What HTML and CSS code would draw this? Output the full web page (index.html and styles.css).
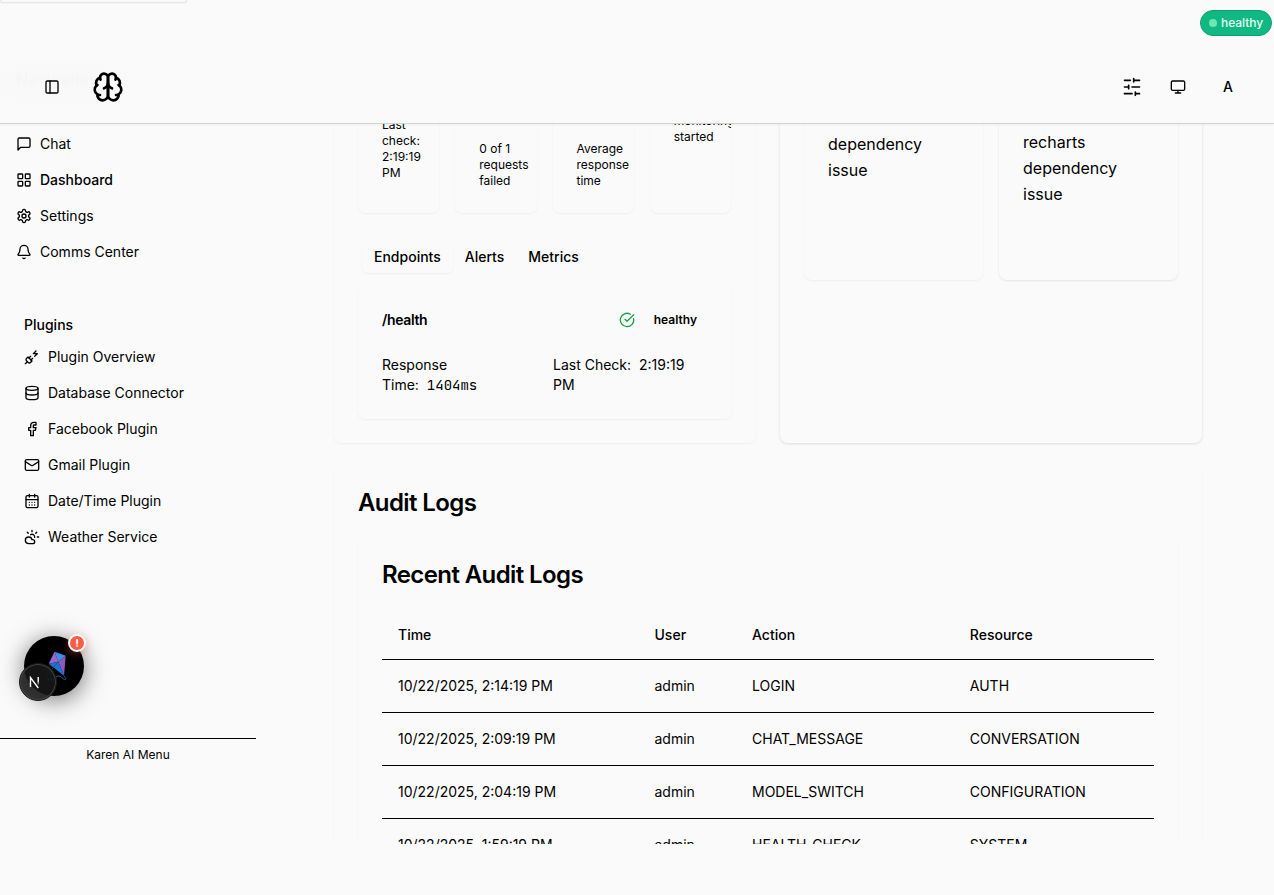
FILE: index.html
```html
<!DOCTYPE html>
<html lang="en">
<head>
<meta charset="utf-8">
<title>Karen AI Dashboard</title>
<link rel="stylesheet" href="styles.css">
</head>
<body>
<div class="top-strip">
  <div class="peek-card"></div>
  <div class="status-pill"><span class="status-dot"></span>healthy</div>
</div>
<header class="header">
  <div class="ghost-title">Navigation</div>
  <div class="header-left">
    <svg class="icon" viewBox="0 0 24 24"><rect width="18" height="18" x="3" y="3" rx="2"/><path d="M9 3v18"/></svg>
    <svg class="icon brain" viewBox="0 0 24 24"><path d="M12 5a3 3 0 1 0-5.997.125 4 4 0 0 0-2.526 5.77 4 4 0 0 0 .556 6.588A4 4 0 1 0 12 18Z"/><path d="M12 5a3 3 0 1 1 5.997.125 4 4 0 0 1 2.526 5.77 4 4 0 0 1-.556 6.588A4 4 0 1 1 12 18Z"/><path d="M15 13a4.5 4.5 0 0 1-3-4 4.5 4.5 0 0 1-3 4"/><path d="M17.599 6.5a3 3 0 0 0 .399-1.375"/><path d="M6.003 5.125A3 3 0 0 0 6.401 6.5"/><path d="M3.477 10.896a4 4 0 0 1 .585-.396"/><path d="M19.938 10.5a4 4 0 0 1 .585.396"/><path d="M6 18a4 4 0 0 1-1.967-.516"/><path d="M19.967 17.484A4 4 0 0 1 18 18"/></svg>
  </div>
  <div class="header-right">
    <svg class="icon sliders" viewBox="0 0 24 24"><path d="M21 4h-7M10 4H3M21 12h-9M8 12H3M21 20h-5M12 20H3M14 2v4M8 10v4M16 18v4"/></svg>
    <svg class="icon" viewBox="0 0 24 24"><rect width="20" height="14" x="2" y="3" rx="2"/><path d="M8 21h8M12 17v4"/></svg>
    <span class="avatar">A</span>
  </div>
</header>
<div class="body-row">
  <aside class="sidebar">
    <nav class="menu">
      <a class="item"><svg class="icon" viewBox="0 0 24 24"><path d="M21 15a2 2 0 0 1-2 2H7l-4 4V5a2 2 0 0 1 2-2h14a2 2 0 0 1 2 2z"/></svg>Chat</a>
      <a class="item active"><svg class="icon" viewBox="0 0 24 24"><rect width="7" height="7" x="3" y="3" rx="1"/><rect width="7" height="7" x="14" y="3" rx="1"/><rect width="7" height="7" x="14" y="14" rx="1"/><rect width="7" height="7" x="3" y="14" rx="1"/></svg>Dashboard</a>
      <a class="item"><svg class="icon" viewBox="0 0 24 24"><path d="M12.22 2h-.44a2 2 0 0 0-2 2v.18a2 2 0 0 1-1 1.73l-.43.25a2 2 0 0 1-2 0l-.15-.08a2 2 0 0 0-2.73.73l-.22.38a2 2 0 0 0 .73 2.73l.15.1a2 2 0 0 1 1 1.72v.51a2 2 0 0 1-1 1.74l-.15.09a2 2 0 0 0-.73 2.73l.22.38a2 2 0 0 0 2.73.73l.15-.08a2 2 0 0 1 2 0l.43.25a2 2 0 0 1 1 1.73V20a2 2 0 0 0 2 2h.44a2 2 0 0 0 2-2v-.18a2 2 0 0 1 1-1.73l.43-.25a2 2 0 0 1 2 0l.15.08a2 2 0 0 0 2.73-.73l.22-.39a2 2 0 0 0-.73-2.73l-.15-.08a2 2 0 0 1-1-1.74v-.5a2 2 0 0 1 1-1.74l.15-.09a2 2 0 0 0 .73-2.73l-.22-.38a2 2 0 0 0-2.73-.73l-.15.08a2 2 0 0 1-2 0l-.43-.25a2 2 0 0 1-1-1.73V4a2 2 0 0 0-2-2z"/><circle cx="12" cy="12" r="3"/></svg>Settings</a>
      <a class="item"><svg class="icon" viewBox="0 0 24 24"><path d="M10.268 21a2 2 0 0 0 3.464 0"/><path d="M3.262 15.326A1 1 0 0 0 4 17h16a1 1 0 0 0 .74-1.673C19.41 13.956 18 12.499 18 8A6 6 0 0 0 6 8c0 4.499-1.411 5.956-2.738 7.326"/></svg>Comms Center</a>
    </nav>
    <div class="group">
      <div class="group-title">Plugins</div>
      <nav class="menu-sub">
        <a class="item"><svg class="icon" viewBox="0 0 24 24"><path d="M6.3 20.3a2.4 2.4 0 0 0 3.4 0L12 18l-6-6-2.3 2.3a2.4 2.4 0 0 0 0 3.4Z"/><path d="m2 22 3-3M7.5 13.5 10 11M10.5 16.5 13 14M18 3l-4 4h6l-4 4"/></svg>Plugin Overview</a>
        <a class="item"><svg class="icon" viewBox="0 0 24 24"><ellipse cx="12" cy="5" rx="9" ry="3"/><path d="M3 5v14a9 3 0 0 0 18 0V5"/><path d="M3 12a9 3 0 0 0 18 0"/></svg>Database Connector</a>
        <a class="item"><svg class="icon" viewBox="0 0 24 24"><path d="M18 2h-3a5 5 0 0 0-5 5v3H7v4h3v8h4v-8h3l1-4h-4V7a1 1 0 0 1 1-1h3z"/></svg>Facebook Plugin</a>
        <a class="item"><svg class="icon" viewBox="0 0 24 24"><rect width="20" height="16" x="2" y="4" rx="2"/><path d="m22 7-8.97 5.7a1.94 1.94 0 0 1-2.06 0L2 7"/></svg>Gmail Plugin</a>
        <a class="item"><svg class="icon" viewBox="0 0 24 24"><path d="M8 2v4M16 2v4"/><rect width="18" height="18" x="3" y="4" rx="2"/><path d="M3 10h18M8 14h.01M12 14h.01M16 14h.01M8 18h.01M12 18h.01M16 18h.01"/></svg>Date/Time Plugin</a>
        <a class="item"><svg class="icon" viewBox="0 0 24 24"><path d="M12 2v2M4.93 4.93l1.41 1.41M20 12h2M19.07 4.93l-1.41 1.41"/><path d="M15.947 12.65a4 4 0 0 0-5.925-4.128"/><path d="M13 22H7a5 5 0 1 1 4.9-6H13a3 3 0 0 1 0 6Z"/></svg>Weather Service</a>
      </nav>
    </div>
    <div class="side-footer">Karen AI Menu</div>
  </aside>
  <main class="main">
    <div class="cards">
      <section class="card health">
        <div class="stats">
          <div class="stat first">Last check: 2:19:19 PM</div>
          <div class="stat">0 of 1 requests failed</div>
          <div class="stat">Average response time</div>
          <div class="stat last">monitoring started</div>
        </div>
        <div class="tabs"><span class="tab selected">Endpoints</span><span class="tab">Alerts</span><span class="tab">Metrics</span></div>
        <div class="endpoint">
          <div class="endpoint-head">
            <span class="endpoint-name">/health</span>
            <svg class="icon ok" viewBox="0 0 24 24"><path d="M21.801 10A10 10 0 1 1 17 3.335"/><path d="m9 11 3 3L22 4"/></svg>
            <span class="endpoint-state">healthy</span>
          </div>
          <div class="endpoint-info">
            <div>Response<br>Time: <span class="mono">1404ms</span></div>
            <div>Last Check: <span class="when">2:19:19 PM</span></div>
          </div>
        </div>
      </section>
      <section class="card charts">
        <div class="chart">dependency issue</div>
        <div class="chart raised">recharts dependency issue</div>
      </section>
    </div>
    <section class="card audit">
      <h2>Audit Logs</h2>
      <div class="log-card">
        <h2>Recent Audit Logs</h2>
        <table>
          <colgroup><col class="c-time"><col class="c-user"><col class="c-action"><col></colgroup>
          <thead><tr><th>Time</th><th>User</th><th>Action</th><th>Resource</th></tr></thead>
          <tbody>
            <tr><td>10/22/2025, 2:14:19 PM</td><td>admin</td><td>LOGIN</td><td>AUTH</td></tr>
            <tr><td>10/22/2025, 2:09:19 PM</td><td>admin</td><td>CHAT_MESSAGE</td><td>CONVERSATION</td></tr>
            <tr><td>10/22/2025, 2:04:19 PM</td><td>admin</td><td>MODEL_SWITCH</td><td>CONFIGURATION</td></tr>
            <tr><td>10/22/2025, 1:59:19 PM</td><td>admin</td><td>HEALTH_CHECK</td><td>SYSTEM</td></tr>
          </tbody>
        </table>
      </div>
    </section>
  </main>
</div>
<div class="assistant">
  <svg class="kite" viewBox="0 0 22 30"><path d="M8.5.7 19.7 4.7 12.3 10.7z" fill="#3c8fe6"/><path d="M8.5.7 2.7 12.7 12.3 10.7z" fill="#9a66cc"/><path d="M19.7 4.7 18 24.7 12.3 10.7z" fill="#9058bc"/><path d="M2.7 12.7 12.3 10.7 18 24.7z" fill="#1976d8"/><path d="M12.3 10.7 1 24" stroke="#303d4c" stroke-width=".8" fill="none"/><path d="M18 24.7Q21 29 18.5 28.5C16 28 15 24.500 12 25 9 25.500 8 29.500 4 29 2 28.700 1 28 1 27" stroke="#125c9c" fill="none"/></svg>
  <div class="dev-badge"><svg class="n-mark" viewBox="0 0 12 14"><defs><linearGradient id="fade" x1="0" y1="0" x2="0" y2="1"><stop offset="0.5" stop-color="#fff"/><stop offset="1" stop-color="#fff" stop-opacity="0"/></linearGradient></defs><path d="M1.500 12V2.500l7.800 10.500" fill="none" stroke="#fff" stroke-width="1.400"/><rect x="8.500" y="2" width="1.400" height="8.500" fill="url(#fade)"/></svg></div>
  <div class="alert-badge">!</div>
</div>
</body>
</html>
```
FILE: styles.css
```css
* { box-sizing: border-box; }
body {
  margin: 0;
  height: 895px;
  overflow: hidden;
  background: #fafafa;
  color: #000;
  font: 14px/20px Inter, "Liberation Sans", sans-serif;
}
.icon {
  width: 16px; height: 16px; flex: none; display: block;
  fill: none; stroke: currentColor; stroke-width: 2;
  stroke-linecap: round; stroke-linejoin: round;
}

.top-strip { height: 51px; display: flex; justify-content: space-between; align-items: flex-start; padding-right: 2px; }
.peek-card {
  width: 187px; height: 3px;
  border: 1px solid #e6e6e6; border-top: 0;
  border-radius: 0 0 6px 6px;
  box-shadow: 0 1px 1px rgba(0,0,0,.03);
}
.status-pill {
  margin-top: 10px; height: 26px; width: 72px;
  display: flex; align-items: center; gap: 4px; padding-left: 8px;
  background: #10b981; border: 1px solid #0d9f70; border-radius: 13px;
  color: #e4fff4; font-size: 12px; font-weight: 500; letter-spacing: -.05px;
}
.status-dot { width: 8px; height: 8px; border-radius: 50%; background: #6ee7b7; }

.header {
  position: relative; z-index: 2;
  height: 73px; display: flex; justify-content: space-between; align-items: center;
  border-bottom: 1px solid #d2d2d2;
  box-shadow: 0 1px 2px rgba(0,0,0,.05);
  background: radial-gradient(ellipse 125px 40px at 60px 32px, #f8f8f8, #fafafa);
}
.ghost-title {
  position: absolute; left: 16px; top: 18px;
  color: #f6f6f6; font-weight: 600; font-size: 16px; filter: blur(.5px);
}
.header-left { position: relative; display: flex; align-items: center; gap: 32px; padding-left: 44px; }
.brain { width: 32px; height: 32px; }
.header-right { display: flex; align-items: center; padding-right: 28px; gap: 28px; }
.sliders { width: 20px; height: 20px; }
.avatar { width: 36px; text-align: center; font-weight: 500; margin-left: -4px; }

.body-row { display: flex; height: 720px; overflow: hidden; }
.sidebar { width: 256px; flex: none; display: flex; flex-direction: column; }
.menu { padding: 2px 8px 0; }
.item { display: flex; align-items: center; gap: 8px; height: 36px; padding: 0 8px; }
.active { font-weight: 500; }
.group { padding: 39px 16px 0; }
.group-title { height: 32px; line-height: 32px; padding-left: 8px; font-weight: 500; margin-bottom: -2px; }
.group .item { padding-left: 8px; }
.side-footer {
  margin-top: auto; height: 106px; padding-top: 8px;
  border-top: 1px solid #000; text-align: center; font-size: 12px; line-height: 16px;
}

.main { flex: 1; padding: 0 72px 0 78px; }
.cards { display: grid; grid-template-columns: 422px 422px; gap: 24px; height: 319px; }
.card { border-radius: 8px; box-shadow: 0 1px 2px rgba(0,0,0,.05); }
.health { padding: 0 24px; margin-top: -24px; padding-top: 24px; }
.stats { display: grid; grid-template-columns: repeat(4, minmax(0, 1fr)); gap: 16px; padding-right: 1px; }
.stat {
  height: 113px; margin-top: -24px; padding: 41px 0 0 24px;
  border-radius: 8px; box-shadow: 0 1px 2px rgba(0,0,0,.05);
  font-size: 12px; line-height: 16px;
}
.first { padding-top: 17px; padding-right: 10px; }
.last { padding-top: 13px; overflow: hidden; }
.tabs { display: flex; padding: 28px 4px 0; }
.tab { height: 32px; line-height: 32px; padding: 0 12px; font-weight: 500; }
.selected { border-radius: 6px; box-shadow: 0 1px 2px rgba(0,0,0,.05); }
.endpoint {
  margin-top: 13px; height: 133px; padding: 24px;
  border-radius: 8px; box-shadow: 0 1px 2px rgba(0,0,0,.05);
}
.endpoint-head { display: flex; align-items: center; height: 20px; }
.endpoint-name { flex: 1; font-weight: 600; letter-spacing: -.35px; }
.ok { color: #16a34a; }
.endpoint-state { margin: 0 11px 0 19px; font-size: 12px; font-weight: 600; }
.endpoint-info { display: grid; grid-template-columns: 1fr 1fr; gap: 16px; margin-top: 25px; }
.mono { font-family: "JetBrains Mono", "Roboto Mono", "Liberation Mono", monospace; margin-left: 4px; }
.when { margin-left: 4px; }
.charts {
  margin-top: -24px; padding: 24px 24px 0; display: grid; grid-template-columns: 1fr 1fr; gap: 16px; align-items: start;
  box-shadow: 0 1px 3px rgba(0,0,0,.12);
}
.chart {
  height: 180px; margin-top: -24px; padding: 31px 40px 0 24px;
  border-radius: 8px; box-shadow: 0 1px 2px rgba(0,0,0,.05);
  font-size: 16px; line-height: 26px;
}
.raised { padding-top: 29px; box-shadow: 0 1px 2px rgba(0,0,0,.09); }

.audit { margin-top: 24px; height: 440px; padding: 24px 24px 0; }
h2 { margin: 0; font-size: 24px; line-height: 24px; font-weight: 600; letter-spacing: -.6px; }
.log-card { margin-top: 24px; height: 380px; padding: 24px 24px 0; border-radius: 8px; box-shadow: 0 1px 2px rgba(0,0,0,.05); }
table { width: 772px; margin-top: 24px; border-collapse: separate; border-spacing: 0; table-layout: fixed; }
.c-time { width: 256.5px; }
.c-user { width: 97.5px; }
.c-action { width: 217.8px; }
th { height: 49px; padding: 0 16px; text-align: left; font-weight: 500; border-bottom: 1px solid #000; }
td { padding: 16px; border-bottom: 1px solid #000; }

/* floating assistant button with its overlaid badges */
.assistant {
  position: absolute; z-index: 3; left: 24px; top: 636px; width: 60px; height: 60px;
  border-radius: 50%; background: #000; box-shadow: 0 4px 24px rgba(0,0,0,.55);
}
.kite { position: absolute; left: 22px; top: 15px; width: 22px; height: 30px; }
.dev-badge {
  position: absolute; left: -5px; top: 27px; width: 38px; height: 38px;
  border-radius: 50%; background: rgba(24,24,24,.87); border: 1px solid #191919;
  box-shadow: inset 0 0 0 1px #444; display: flex; align-items: center; justify-content: center;
}
.n-mark { width: 12px; height: 14px; margin-right: 7px; }
.alert-badge {
  position: absolute; left: 44px; top: -2px; width: 18px; height: 18px;
  border: 2px solid #fff; border-radius: 50%; background: #fa5c45;
  box-shadow: 0 2px 8px rgba(250,80,70,.4);
  color: #fff; font-size: 11px; line-height: 14px; font-weight: 700; text-align: center;
}
```
